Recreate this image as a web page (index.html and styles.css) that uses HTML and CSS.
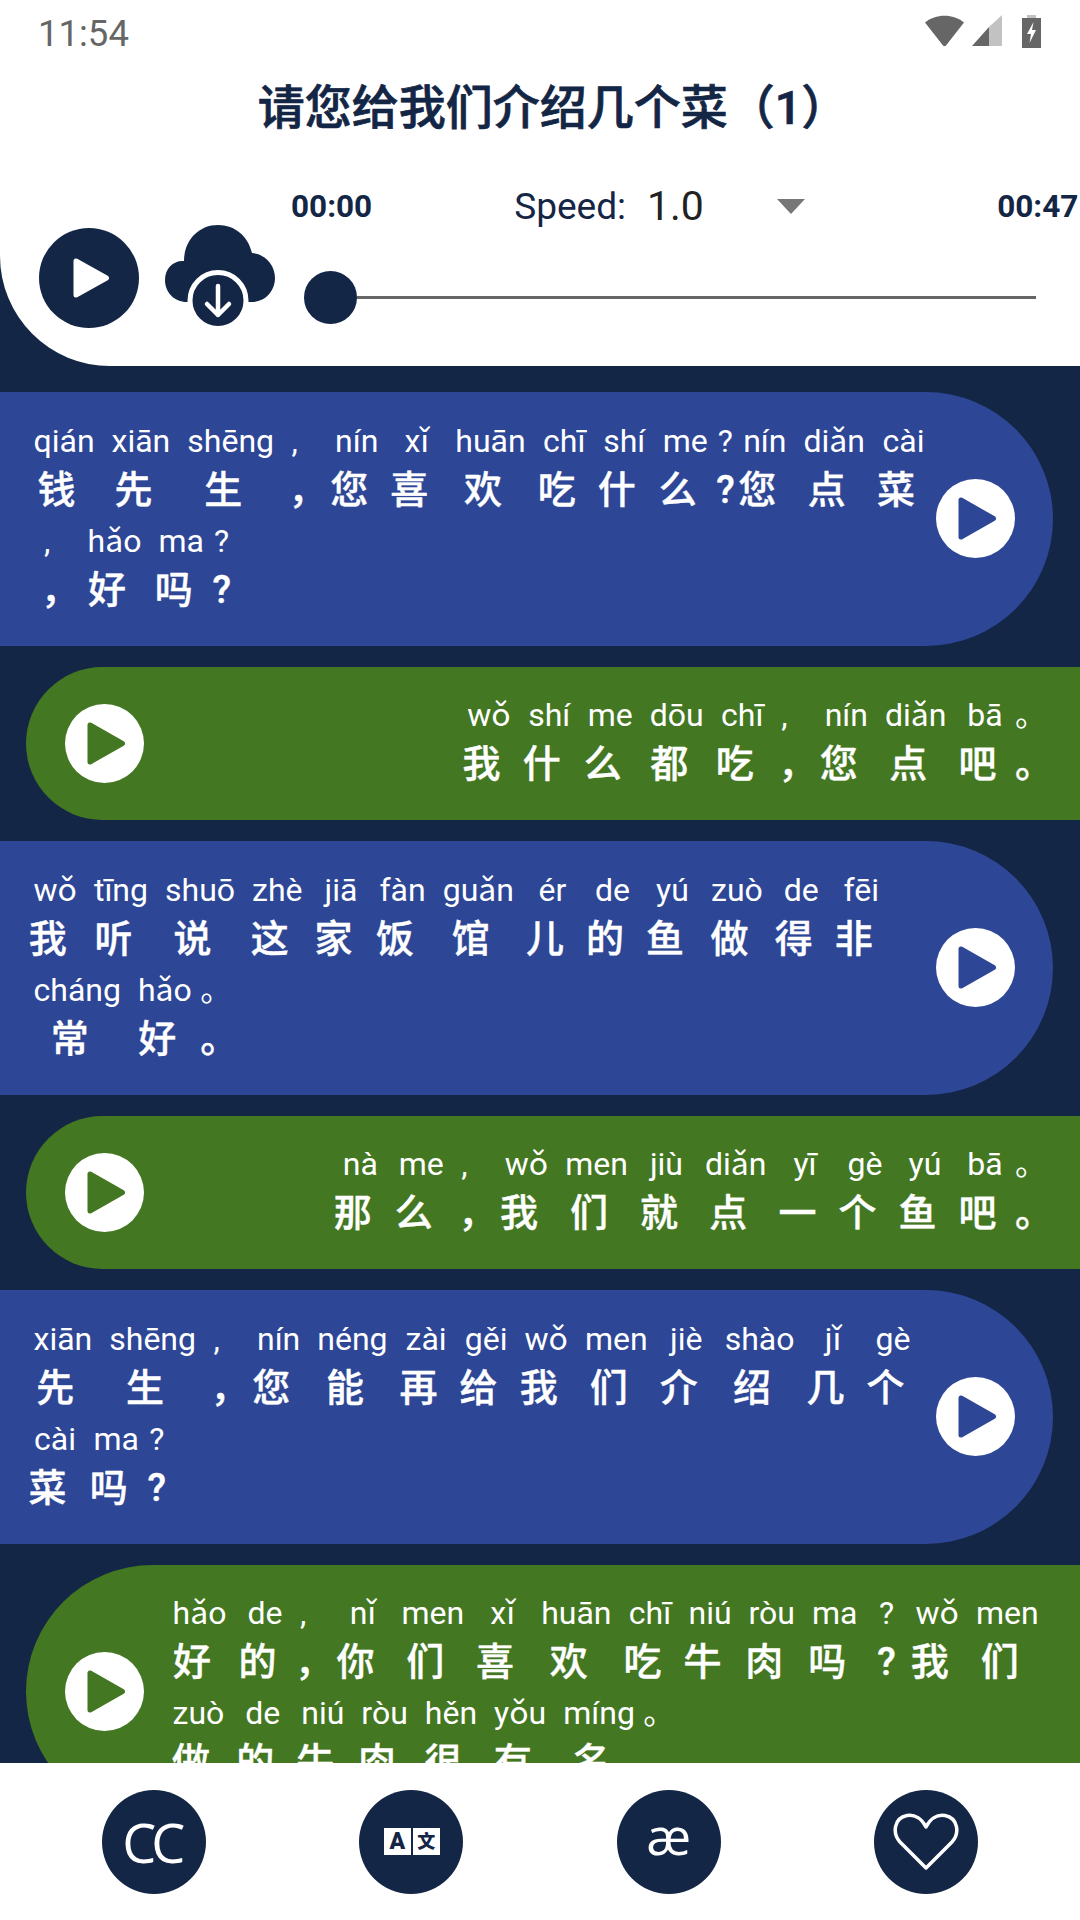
FILE: index.html
```html
<!DOCTYPE html>
<html lang="zh">

<head>
    <meta charset="UTF-8">
    <title>请您给我们介绍几个菜（1）</title>
    <link rel="stylesheet" href="styles.css">
</head>

<body>
    <div class="page">
        <header class="top">
            <div class="status">
                <span class="clock">11:54</span>
                <div class="status_icons">
                    <svg class="wifi" width="41" height="32" viewBox="0 0 40 32">
                        <path d="M0.5 7.5C11 -1.5 29 -1.5 39.5 7.5L21.5 30.5Q20 32 18.5 30.5Z" fill="#666" />
                    </svg>
                    <svg class="signal" width="32" height="32" viewBox="0 0 32 32">
                        <path d="M18 12V31H1Z" fill="#666" />
                        <path d="M18 12L31 0V31H18Z" fill="#c2c2c2" />
                    </svg>
                    <svg width="19" height="33" viewBox="0 0 19 33">
                        <path d="M5 0H14V3H19V33H0V3H5Z" fill="#666" />
                        <path d="M5 0H14V3H5Z" fill="#c2c2c2" />
                        <path d="M11.5 7L5 19H9L7.5 28L14 15H10Z" fill="#fff" />
                    </svg>
                </div>
            </div>
            <h1 class="title">请您给我们介绍几个菜（1）</h1>
            <div class="times">
                <span class="time">00:00</span>
                <div class="speed">
                    <span class="speed_label">Speed:</span>
                    <span class="speed_value">1.0</span>
                    <span class="speed_arrow"></span>
                </div>
                <span class="time">00:47</span>
            </div>
            <div class="player">
                <svg class="big_play" width="100" height="100" viewBox="0 0 100 100">
                    <circle cx="50" cy="50" r="50" fill="#142645" />
                    <path d="M37 33V67L67.5 50Z" fill="#fff" stroke="#fff" stroke-width="5" stroke-linejoin="round" />
                </svg>
                <svg class="cloud" width="110" height="102" viewBox="0 0 110 102">
                    <path d="M30 77H22C9 77 0 67 0 55C0 43 9 35 19 36C19 16 33 0 53 0C70 0 83 11 87 28C100 29 110 40 110 53C110 66 100 77 87 77Z" fill="#142645" />
                    <circle cx="53" cy="75.5" r="28" fill="#142645" stroke="#fff" stroke-width="5" />
                    <path d="M53 61V90M42 79L53 90L64 79" fill="none" stroke="#fff" stroke-width="4.5" stroke-linecap="round" stroke-linejoin="round" />
                </svg>
                <div class="slider">
                    <span class="knob"></span>
                    <span class="track"></span>
                </div>
            </div>
        </header>

        <main class="list">
            <div class="bubble blue">
                <div class="words">
                    <div class="word"><span class="py">qián</span><span class="hz">钱</span></div>
                    <div class="word"><span class="py">xiān</span><span class="hz">先</span></div>
                    <div class="word"><span class="py">shēng</span><span class="hz">生</span></div>
                    <div class="word mark"><span class="py">,</span><span class="hz">，</span></div>
                    <div class="word"><span class="py">nín</span><span class="hz">您</span></div>
                    <div class="word"><span class="py">xǐ</span><span class="hz">喜</span></div>
                    <div class="word"><span class="py">huān</span><span class="hz">欢</span></div>
                    <div class="word"><span class="py">chī</span><span class="hz">吃</span></div>
                    <div class="word"><span class="py">shí</span><span class="hz">什</span></div>
                    <div class="word"><span class="py">me</span><span class="hz">么</span></div>
                    <div class="word ask"><span class="py">?</span><span class="hz">?</span></div>
                    <div class="word"><span class="py">nín</span><span class="hz">您</span></div>
                    <div class="word"><span class="py">diǎn</span><span class="hz">点</span></div>
                    <div class="word"><span class="py">cài</span><span class="hz">菜</span></div>
                    <div class="word mark lead"><span class="py">,</span><span class="hz">，</span></div>
                    <div class="word"><span class="py">hǎo</span><span class="hz">好</span></div>
                    <div class="word"><span class="py">ma</span><span class="hz">吗</span></div>
                    <div class="word ask"><span class="py">?</span><span class="hz">?</span></div>
                </div>
                <svg class="play" width="79" height="79" viewBox="0 0 79 79">
                    <circle cx="39.5" cy="39.5" r="39.5" fill="#fff" />
                    <path d="M25 21V58L57.5 39.5Z" fill="#2d4696" stroke="#2d4696" stroke-width="5" stroke-linejoin="round" />
                </svg>
            </div>

            <div class="bubble green">
                <svg class="play" width="79" height="79" viewBox="0 0 79 79">
                    <circle cx="39.5" cy="39.5" r="39.5" fill="#fff" />
                    <path d="M25 21V58L57.5 39.5Z" fill="#437722" stroke="#437722" stroke-width="5" stroke-linejoin="round" />
                </svg>
                <div class="words to_right">
                    <div class="word"><span class="py">wǒ</span><span class="hz">我</span></div>
                    <div class="word"><span class="py">shí</span><span class="hz">什</span></div>
                    <div class="word"><span class="py">me</span><span class="hz">么</span></div>
                    <div class="word"><span class="py">dōu</span><span class="hz">都</span></div>
                    <div class="word"><span class="py">chī</span><span class="hz">吃</span></div>
                    <div class="word mark"><span class="py">,</span><span class="hz">，</span></div>
                    <div class="word"><span class="py">nín</span><span class="hz">您</span></div>
                    <div class="word"><span class="py">diǎn</span><span class="hz">点</span></div>
                    <div class="word"><span class="py">bā</span><span class="hz">吧</span></div>
                    <div class="word stop"><span class="py">。</span><span class="hz">。</span></div>
                </div>
            </div>

            <div class="bubble blue">
                <div class="words">
                    <div class="word"><span class="py">wǒ</span><span class="hz">我</span></div>
                    <div class="word"><span class="py">tīng</span><span class="hz">听</span></div>
                    <div class="word"><span class="py">shuō</span><span class="hz">说</span></div>
                    <div class="word"><span class="py">zhè</span><span class="hz">这</span></div>
                    <div class="word"><span class="py">jiā</span><span class="hz">家</span></div>
                    <div class="word"><span class="py">fàn</span><span class="hz">饭</span></div>
                    <div class="word"><span class="py">guǎn</span><span class="hz">馆</span></div>
                    <div class="word"><span class="py">ér</span><span class="hz">儿</span></div>
                    <div class="word"><span class="py">de</span><span class="hz">的</span></div>
                    <div class="word"><span class="py">yú</span><span class="hz">鱼</span></div>
                    <div class="word"><span class="py">zuò</span><span class="hz">做</span></div>
                    <div class="word"><span class="py">de</span><span class="hz">得</span></div>
                    <div class="word"><span class="py">fēi</span><span class="hz">非</span></div>
                    <div class="word"><span class="py">cháng</span><span class="hz">常</span></div>
                    <div class="word"><span class="py">hǎo</span><span class="hz">好</span></div>
                    <div class="word stop"><span class="py">。</span><span class="hz">。</span></div>
                </div>
                <svg class="play" width="79" height="79" viewBox="0 0 79 79">
                    <circle cx="39.5" cy="39.5" r="39.5" fill="#fff" />
                    <path d="M25 21V58L57.5 39.5Z" fill="#2d4696" stroke="#2d4696" stroke-width="5" stroke-linejoin="round" />
                </svg>
            </div>

            <div class="bubble green">
                <svg class="play" width="79" height="79" viewBox="0 0 79 79">
                    <circle cx="39.5" cy="39.5" r="39.5" fill="#fff" />
                    <path d="M25 21V58L57.5 39.5Z" fill="#437722" stroke="#437722" stroke-width="5" stroke-linejoin="round" />
                </svg>
                <div class="words to_right">
                    <div class="word"><span class="py">nà</span><span class="hz">那</span></div>
                    <div class="word"><span class="py">me</span><span class="hz">么</span></div>
                    <div class="word mark"><span class="py">,</span><span class="hz">，</span></div>
                    <div class="word"><span class="py">wǒ</span><span class="hz">我</span></div>
                    <div class="word"><span class="py">men</span><span class="hz">们</span></div>
                    <div class="word"><span class="py">jiù</span><span class="hz">就</span></div>
                    <div class="word"><span class="py">diǎn</span><span class="hz">点</span></div>
                    <div class="word"><span class="py">yī</span><span class="hz">一</span></div>
                    <div class="word"><span class="py">gè</span><span class="hz">个</span></div>
                    <div class="word"><span class="py">yú</span><span class="hz">鱼</span></div>
                    <div class="word"><span class="py">bā</span><span class="hz">吧</span></div>
                    <div class="word stop"><span class="py">。</span><span class="hz">。</span></div>
                </div>
            </div>

            <div class="bubble blue">
                <div class="words">
                    <div class="word"><span class="py">xiān</span><span class="hz">先</span></div>
                    <div class="word"><span class="py">shēng</span><span class="hz">生</span></div>
                    <div class="word mark"><span class="py">,</span><span class="hz">，</span></div>
                    <div class="word"><span class="py">nín</span><span class="hz">您</span></div>
                    <div class="word"><span class="py">néng</span><span class="hz">能</span></div>
                    <div class="word"><span class="py">zài</span><span class="hz">再</span></div>
                    <div class="word"><span class="py">gěi</span><span class="hz">给</span></div>
                    <div class="word"><span class="py">wǒ</span><span class="hz">我</span></div>
                    <div class="word"><span class="py">men</span><span class="hz">们</span></div>
                    <div class="word"><span class="py">jiè</span><span class="hz">介</span></div>
                    <div class="word"><span class="py">shào</span><span class="hz">绍</span></div>
                    <div class="word"><span class="py">jǐ</span><span class="hz">几</span></div>
                    <div class="word"><span class="py">gè</span><span class="hz">个</span></div>
                    <div class="word"><span class="py">cài</span><span class="hz">菜</span></div>
                    <div class="word"><span class="py">ma</span><span class="hz">吗</span></div>
                    <div class="word ask"><span class="py">?</span><span class="hz">?</span></div>
                </div>
                <svg class="play" width="79" height="79" viewBox="0 0 79 79">
                    <circle cx="39.5" cy="39.5" r="39.5" fill="#fff" />
                    <path d="M25 21V58L57.5 39.5Z" fill="#2d4696" stroke="#2d4696" stroke-width="5" stroke-linejoin="round" />
                </svg>
            </div>

            <div class="bubble green">
                <svg class="play" width="79" height="79" viewBox="0 0 79 79">
                    <circle cx="39.5" cy="39.5" r="39.5" fill="#fff" />
                    <path d="M25 21V58L57.5 39.5Z" fill="#437722" stroke="#437722" stroke-width="5" stroke-linejoin="round" />
                </svg>
                <div class="words">
                    <div class="word"><span class="py">hǎo</span><span class="hz">好</span></div>
                    <div class="word"><span class="py">de</span><span class="hz">的</span></div>
                    <div class="word mark tight"><span class="py">,</span><span class="hz">，</span></div>
                    <div class="word"><span class="py">nǐ</span><span class="hz">你</span></div>
                    <div class="word"><span class="py">men</span><span class="hz">们</span></div>
                    <div class="word"><span class="py">xǐ</span><span class="hz">喜</span></div>
                    <div class="word"><span class="py">huān</span><span class="hz">欢</span></div>
                    <div class="word"><span class="py">chī</span><span class="hz">吃</span></div>
                    <div class="word"><span class="py">niú</span><span class="hz">牛</span></div>
                    <div class="word"><span class="py">ròu</span><span class="hz">肉</span></div>
                    <div class="word"><span class="py">ma</span><span class="hz">吗</span></div>
                    <div class="word ask wide"><span class="py">?</span><span class="hz">?</span></div>
                    <div class="word"><span class="py">wǒ</span><span class="hz">我</span></div>
                    <div class="word"><span class="py">men</span><span class="hz">们</span></div>
                    <div class="word"><span class="py">zuò</span><span class="hz">做</span></div>
                    <div class="word"><span class="py">de</span><span class="hz">的</span></div>
                    <div class="word"><span class="py">niú</span><span class="hz">牛</span></div>
                    <div class="word"><span class="py">ròu</span><span class="hz">肉</span></div>
                    <div class="word"><span class="py">hěn</span><span class="hz">很</span></div>
                    <div class="word"><span class="py">yǒu</span><span class="hz">有</span></div>
                    <div class="word"><span class="py">míng</span><span class="hz">名</span></div>
                    <div class="word stop"><span class="py">。</span><span class="hz">。</span></div>
                </div>
            </div>
        </main>

        <footer class="tabs">
            <div class="tab"><span class="tab_cc">CC</span></div>
            <div class="tab">
                <div class="translate">
                    <span class="tr_a">A</span>
                    <span class="tr_b">文</span>
                </div>
            </div>
            <div class="tab"><span class="tab_ae">æ</span></div>
            <div class="tab">
                <svg width="66" height="58" viewBox="0 0 66 58">
                    <path d="M33 55L7 29C-1 20 1 5 14 2.5C22 1 29 6 33 14C37 6 44 1 52 2.5C65 5 67 20 59 29Z" fill="none" stroke="#fff" stroke-width="3.5" stroke-linejoin="round" />
                </svg>
            </div>
        </footer>
    </div>
</body>

</html>
```

FILE: styles.css
```css
* {
    box-sizing: border-box;
}

body {
    margin: 0;
    font-family: Roboto, "Noto Sans CJK SC", sans-serif;
}

.page {
    width: 1080px;
    height: 1920px;
    display: flex;
    flex-direction: column;
    overflow: hidden;
    background: #142645;
}

/* header */
.top {
    height: 366px;
    flex: none;
    background: #fff;
    border-bottom-left-radius: 110px;
}

.status {
    height: 62px;
    padding: 0 39px 0 38px;
    display: flex;
    align-items: center;
    justify-content: space-between;
}

.clock {
    padding-top: 4px;
    font-size: 36.5px;
    color: #666;
}

.status_icons {
    display: flex;
    align-items: center;
}

.signal {
    margin-left: 6px;
    margin-right: 19px;
}

.title {
    height: 88px;
    margin: 0;
    padding-left: 26px;
    text-align: center;
    font-size: 47px;
    line-height: 92px;
    font-weight: 500;
    -webkit-text-stroke: 0.7px #142645;
    color: #142645;
}

.times {
    height: 46px;
    margin-top: 33px;
    padding-left: 291px;
    display: flex;
    align-items: center;
}

.time {
    font-size: 31.5px;
    font-weight: 700;
    color: #142645;
}

.speed {
    width: 483px;
    flex: none;
    margin-left: 142px;
    display: flex;
    align-items: center;
}

.speed_label {
    font-size: 37px;
    color: #142645;
}

.speed_value {
    margin-left: 21px;
    font-size: 41px;
    color: #222;
}

.speed_arrow {
    margin-left: 73px;
    border-top: 15px solid #777;
    border-left: 14px solid transparent;
    border-right: 14px solid transparent;
}

.player {
    margin-top: -1px;
    padding-left: 39px;
    display: flex;
    align-items: flex-start;
}

.cloud {
    margin-left: 26px;
    margin-top: -3px;
}

.slider {
    margin-left: 29px;
    margin-top: 43px;
    display: flex;
    align-items: center;
}

.knob {
    width: 53px;
    height: 53px;
    border-radius: 50%;
    background: #142645;
}

.track {
    width: 679px;
    height: 3px;
    background: #666;
}

/* messages */
.list {
    flex: 1;
    min-height: 0;
    overflow: hidden;
    padding-top: 26px;
    display: flex;
    flex-direction: column;
    gap: 21px;
}

.bubble {
    flex: none;
    display: flex;
    align-items: center;
    padding: 26.5px 0 27.5px;
}

.blue {
    margin-right: 27px;
    background: #2d4696;
    border-radius: 0 127px 127px 0;
}

.green {
    margin-left: 26px;
    padding: 26px 0 27px;
    background: #437722;
    border-radius: 127px 0 0 127px;
}

.play {
    flex: none;
}

.blue .play {
    margin-left: -15px;
    margin-right: 38px;
}

.blue .words {
    padding-left: 25px;
}

.green .play {
    margin-left: 39px;
    margin-right: 20px;
}

.words {
    flex: 1;
    min-width: 0;
    display: flex;
    flex-wrap: wrap;
}

.to_right {
    justify-content: flex-end;
    padding-right: 27px;
}

.word {
    min-width: 60px;
    height: 100px;
    display: flex;
    flex-direction: column;
    align-items: center;
    color: #fff;
}

.py {
    padding: 0 8.5px;
    font-size: 32px;
    line-height: 45px;
    white-space: nowrap;
}

.hz {
    padding-right: 15px;
    font-size: 38px;
    line-height: 52px;
    font-weight: 500;
    -webkit-text-stroke: 0.4px #fff;
    white-space: nowrap;
}

.mark,
.stop {
    min-width: 37px;
    align-items: flex-start;
}

.mark .py {
    padding: 0 0 0 9px;
}

.mark .hz {
    padding: 0 0 0 6px;
}

.stop .hz,
.ask .hz {
    padding: 0;
}

.lead {
    margin-left: 10px;
}

.tight {
    min-width: 36px;
}

.tight .py {
    padding-left: 5px;
}

.tight .hz {
    padding: 0;
}

.stop .py {
    padding: 0;
}

.ask {
    min-width: 17px;
}

.wide {
    min-width: 41px;
}

.ask .py {
    padding: 0;
}

/* bottom buttons */
.tabs {
    height: 157px;
    flex: none;
    padding: 0 25px;
    background: #fff;
    display: grid;
    grid-template-columns: repeat(4, 1fr);
    justify-items: center;
    align-items: center;
}

.tab {
    width: 104px;
    height: 104px;
    border-radius: 50%;
    background: #142645;
    color: #fff;
    display: flex;
    align-items: center;
    justify-content: center;
}

.tab_cc {
    font-family: "Open Sans", sans-serif;
    font-size: 54px;
    letter-spacing: -5px;
    margin-left: -5px;
}

.tab_ae {
    font-family: "Open Sans", sans-serif;
    font-size: 52px;
    line-height: 52px;
    margin-top: -14px;
}

.translate {
    margin-left: 1px;
    display: flex;
    gap: 2px;
}

.tr_a,
.tr_b {
    width: 27px;
    height: 27px;
    background: #fff;
    color: #142645;
    text-align: center;
    font-size: 23px;
    line-height: 27px;
    font-weight: 900;
}

.tr_b {
    font-size: 18px;
}
```
